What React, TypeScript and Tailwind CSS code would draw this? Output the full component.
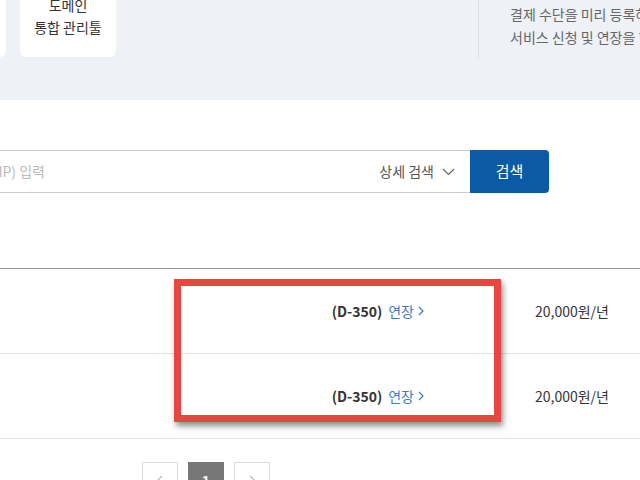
const rows = [
  { dday: "(D-350)", price: "20,000원/년" },
  { dday: "(D-350)", price: "20,000원/년" },
];

export default function App() {
  return (
    <div
      className="relative w-[640px] h-[480px] overflow-hidden bg-white text-[#333]"
      style={{ fontFamily: '"Noto Sans CJK KR", "Noto Sans", sans-serif' }}
    >
      {/* 상단 안내 영역 */}
      <div className="h-[100px] bg-[#eef1f6] flex items-start overflow-hidden">
        <div className="shrink-0 ml-[-90px] mt-[-62px] h-[119px] w-[96px] rounded-[6px] bg-white" />
        <div className="shrink-0 ml-[14px] mt-[-62px] h-[119px] w-[96px] rounded-[6px] bg-white flex flex-col justify-end items-center pb-[19px] text-[14px] leading-[22px] text-[#333] whitespace-nowrap">
          <span>도메인</span>
          <span>통합 관리툴</span>
        </div>
        <div className="shrink-0 ml-[362px] h-[58px] border-l border-[#dde1e7]" />
        <div className="shrink-0 ml-[31px] mt-[3px] text-[14px] leading-[23px] text-[#666] whitespace-nowrap">
          <p>결제 수단을 미리 등록하면 편리하게</p>
          <p>서비스 신청 및 연장을 할 수 있습니다</p>
        </div>
      </div>

      {/* 검색 */}
      <div className="mt-[50px] flex">
        <div className="shrink-0 w-[470px] h-[43px] border-y border-[#cccccc] flex items-center">
          <div className="w-[45px] overflow-hidden flex justify-end whitespace-nowrap text-[14px] text-[#bbbbbb]">
            도메인명(IP) 입력
          </div>
          <div className="flex-1" />
          <span className="text-[14px] text-[#555]">상세 검색</span>
          <svg className="ml-[8px] mr-[15px]" width="13" height="8" viewBox="0 0 13 8" fill="none">
            <polyline points="1,1 6.5,6.5 12,1" stroke="#666" strokeWidth="1.2" />
          </svg>
        </div>
        <button className="shrink-0 w-[79px] h-[43px] bg-[#0b5aa5] rounded-r-[4px] text-white text-[15px]">
          검색
        </button>
      </div>

      {/* 목록 */}
      <div className="mt-[75px] border-t border-[#9a9a9a]">
        {rows.map((row, i) => (
          <div key={i} className="h-[85px] border-b border-[#e3e3e3] flex items-center text-[14px]">
            <div className="shrink-0 w-[424px] flex justify-end items-center">
              <span className="font-bold text-[#333]">{row.dday}</span>
              <span className="ml-[6px] text-[#3a7cc7]">연장</span>
              <svg className="ml-[4px]" width="6" height="10" viewBox="0 0 6 10" fill="none">
                <polyline points="1,1 5,5 1,9" stroke="#3a7cc7" strokeWidth="1.2" />
              </svg>
            </div>
            <span className="ml-[111px] text-[#333] whitespace-nowrap">{row.price}</span>
          </div>
        ))}
      </div>

      {/* 페이지 */}
      <div className="mt-[23px] ml-[142px] flex gap-[10px]">
        <div className="w-[36px] h-[36px] border border-[#dddddd] flex items-center justify-center">
          <svg width="6" height="10" viewBox="0 0 6 10" fill="none">
            <polyline points="5,1 1,5 5,9" stroke="#bbb" strokeWidth="1.2" />
          </svg>
        </div>
        <div className="w-[36px] h-[36px] bg-[#777777] flex items-center justify-center text-white text-[14px] font-bold">
          1
        </div>
        <div className="w-[36px] h-[36px] border border-[#dddddd] flex items-center justify-center">
          <svg width="6" height="10" viewBox="0 0 6 10" fill="none">
            <polyline points="1,1 5,5 1,9" stroke="#bbb" strokeWidth="1.2" />
          </svg>
        </div>
      </div>

      {/* 강조 표시 */}
      <div className="absolute left-[174px] top-[279px] w-[327px] h-[143px] border-[7px] border-[#e8473f] shadow-[2px_4px_6px_rgba(0,0,0,0.45)]" />
    </div>
  );
}
